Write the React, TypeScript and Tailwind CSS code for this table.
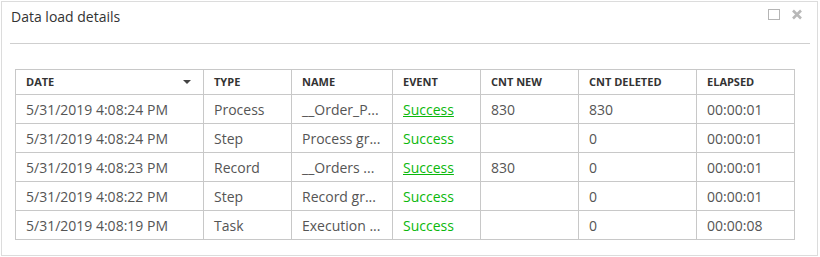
import React from 'react'

const rows = [
  { date: '5/31/2019 4:08:24 PM', type: 'Process', name: '__Order_P...', link: true, cntNew: '830', cntDel: '830', elapsed: '00:00:01' },
  { date: '5/31/2019 4:08:24 PM', type: 'Step', name: 'Process gr...', link: false, cntNew: '', cntDel: '0', elapsed: '00:00:01' },
  { date: '5/31/2019 4:08:23 PM', type: 'Record', name: '__Orders ...', link: true, cntNew: '830', cntDel: '0', elapsed: '00:00:01' },
  { date: '5/31/2019 4:08:22 PM', type: 'Step', name: 'Record gr...', link: false, cntNew: '', cntDel: '0', elapsed: '00:00:01' },
  { date: '5/31/2019 4:08:19 PM', type: 'Task', name: 'Execution ...', link: false, cntNew: '', cntDel: '0', elapsed: '00:00:08' },
]

const cols = [
  { label: 'DATE', w: 'w-[188px]' },
  { label: 'TYPE', w: 'w-[88px]' },
  { label: 'NAME', w: 'w-[101px]' },
  { label: 'EVENT', w: 'w-[88px]' },
  { label: 'CNT NEW', w: 'w-[98px]' },
  { label: 'CNT DELETED', w: 'w-[118px]' },
  { label: 'ELAPSED', w: 'w-[98px]' },
]

export default function App() {
  return (
    <div className="w-[820px] h-[257px] bg-white pt-[1px] pl-[1px]" style={{ fontFamily: '"Open Sans", "Liberation Sans", sans-serif' }}>
      <div className="w-[817px] h-[255px] border border-[#dcdcdc] bg-white flex flex-col">
        <div className="h-[41px] pl-[9px] pr-[14px] pt-[5px] flex items-start justify-between">
          <h2 className="text-[14px] leading-[19px] text-[#333]">Data load details</h2>
          <div className="flex items-center gap-[11px] pt-[2px]">
            <span className="block w-[12px] h-[11px] border border-[#b5b5b5]" />
            <svg width="12" height="11" viewBox="0 0 12 11">
              <path d="M2 1.5 L10 9.5 M10 1.5 L2 9.5" stroke="#b8b8b8" strokeWidth="2.6" />
            </svg>
          </div>
        </div>
        <div className="h-px bg-[#cfcfcf] ml-[8px] mr-[7px]" />
        <table className="mt-[25px] ml-[13px] w-[779px] border-collapse table-fixed text-[14px] text-[#555]">
          <thead>
            <tr className="h-[25px]">
              {cols.map((c, i) => (
                <th key={c.label} className={`${c.w} border border-[#c8c8c8] px-[10px] text-left text-[11px] font-bold text-[#333]`}>
                  <div className="flex items-center justify-between">
                    <span>{c.label}</span>
                    {i === 0 && (
                      <svg width="8" height="4" viewBox="0 0 8 4" className="mr-[2px]">
                        <path d="M0 0 L8 0 L4 4 Z" fill="#444" />
                      </svg>
                    )}
                  </div>
                </th>
              ))}
            </tr>
          </thead>
          <tbody>
            {rows.map((r, i) => (
              <tr key={i} className="h-[29px]">
                <td className="border border-[#c8c8c8] px-[10px] whitespace-nowrap">{r.date}</td>
                <td className="border border-[#c8c8c8] px-[10px]">{r.type}</td>
                <td className="border border-[#c8c8c8] px-[10px] whitespace-nowrap">{r.name}</td>
                <td className="border border-[#c8c8c8] px-[10px] text-[#0bb80b]">
                  {r.link ? <a href="#" className="underline">Success</a> : 'Success'}
                </td>
                <td className="border border-[#c8c8c8] px-[10px]">{r.cntNew}</td>
                <td className="border border-[#c8c8c8] px-[10px]">{r.cntDel}</td>
                <td className="border border-[#c8c8c8] px-[10px]">{r.elapsed}</td>
              </tr>
            ))}
          </tbody>
        </table>
      </div>
    </div>
  )
}
